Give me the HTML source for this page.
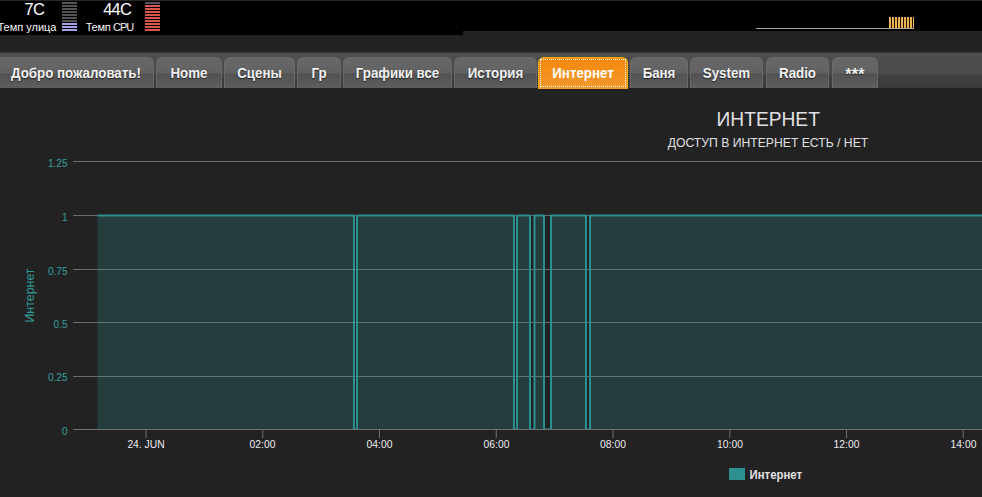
<!DOCTYPE html>
<html lang="ru">
<head>
<meta charset="utf-8">
<title>Интернет</title>
<style>
html,body{margin:0;padding:0;}
body{width:982px;height:497px;overflow:hidden;background:#222;position:relative;font-family:"Liberation Sans","DejaVu Sans",sans-serif;color:#fff;}
#topline{position:absolute;left:0;top:0;width:982px;height:1px;background:#282828;}
#hdrL{position:absolute;left:0;top:1px;width:463px;height:34px;background:#000;}
#hdrR{position:absolute;left:463px;top:1px;width:519px;height:30px;background:#000;}
.val{position:absolute;top:1px;font-size:16.5px;line-height:17px;letter-spacing:-0.8px;color:#fff;text-align:right;white-space:nowrap;}
.lbl{position:absolute;top:21px;font-size:11px;line-height:13px;color:#f4f4f4;text-align:right;white-space:nowrap;}
.vbar{position:absolute;top:2px;width:15px;height:30px;}
.vbar i{display:block;height:2px;margin-bottom:1px;background:#535353;}
.vbar i.b{background:#a6a2ea;}
.vbar i.r{background:#d8564c;}
#hline{position:absolute;left:756px;top:28px;width:158px;height:1px;background:#a8a8a8;}
#hbar{position:absolute;left:889px;top:17px;height:11px;width:25px;background:repeating-linear-gradient(90deg,#e6b450 0,#e6b450 2px,#200 2px,#200 3px);}
#tabs{position:absolute;left:0;top:52px;width:982px;height:36px;background:linear-gradient(#383838 0,#383838 1px,#4e4e4e 1px,#4b4b4b 22px,#404040 24px,#3a3a3a 36px);}
.tab{position:absolute;top:5px;height:31px;box-sizing:border-box;border:1px solid #696969;border-bottom:none;border-radius:6px 6px 0 0;
 background:linear-gradient(#686868 0,#626262 48%,#525252 54%,#5e5e5e 100%);
 font-weight:bold;font-size:13.3px;line-height:31px;text-align:center;color:#f2f2f2;text-shadow:0 1px 1px #222;white-space:nowrap;}
.tab .t{display:inline-block;line-height:normal;vertical-align:baseline;transform:scaleY(1.07);transform-origin:50% 79%;}
.tab.act{height:32px;background:linear-gradient(#f5870a 0,#f39a2e 100%);border-color:#ffaf0f;color:#fff;text-shadow:none;}
.tab.act:after{content:"";position:absolute;left:1px;top:1px;right:1px;bottom:2px;border:1px dotted #fff;}
#chart{position:absolute;left:0;top:89px;}
</style>
</head>
<body>
<div id="topline"></div>
<div id="hdrL"></div>
<div id="hdrR"></div>

<div class="val" style="left:0;width:44px;">7C</div>
<div class="lbl" style="left:-20px;width:76.5px;">Темп улица</div>
<div class="vbar" style="left:62px;"><i></i><i></i><i></i><i></i><i></i><i></i><i></i><i class="b"></i><i class="b"></i><i class="b"></i></div>

<div class="val" style="left:80px;width:51px;">44C</div>
<div class="lbl" style="left:60px;width:73px;letter-spacing:-0.3px;">Темп <span style="letter-spacing:-1.1px">CPU</span></div>
<div class="vbar" style="left:145px;"><i></i><i class="r"></i><i class="r"></i><i class="r"></i><i class="r"></i><i class="r"></i><i class="r"></i><i class="r"></i><i class="r"></i><i class="r"></i></div>

<div id="hline"></div>
<div id="hbar"></div>

<div id="tabs">
 <div class="tab" style="left:-8px;width:162px;padding-left:6px;"><span class="t">Добро пожаловать!</span></div>
 <div class="tab" style="left:156px;width:66px;"><span class="t">Home</span></div>
 <div class="tab" style="left:224px;width:71px;"><span class="t">Сцены</span></div>
 <div class="tab" style="left:297px;width:44px;"><span class="t">Гр</span></div>
 <div class="tab" style="left:343px;width:109px;"><span class="t">Графики все</span></div>
 <div class="tab" style="left:454px;width:83px;"><span class="t">История</span></div>
 <div class="tab act" style="left:538px;width:90px;"><span class="t">Интернет</span></div>
 <div class="tab" style="left:630px;width:58px;"><span class="t">Баня</span></div>
 <div class="tab" style="left:690px;width:73px;"><span class="t">System</span></div>
 <div class="tab" style="left:766px;width:63px;"><span class="t">Radio</span></div>
 <div class="tab" style="left:832px;width:46px;"><span style="font-size:16px;letter-spacing:0.2px;position:relative;top:1px;">***</span></div>
</div>

<svg id="chart" width="982" height="408" viewBox="0 89 982 408" font-family="'Liberation Sans','DejaVu Sans',sans-serif">
 <g stroke="#6c6c6e" stroke-width="1" shape-rendering="crispEdges">
  <line x1="73" x2="982" y1="161.5" y2="161.5"/>
  <line x1="73" x2="982" y1="215.5" y2="215.5"/>
  <line x1="73" x2="982" y1="269.5" y2="269.5"/>
  <line x1="73" x2="982" y1="322.5" y2="322.5"/>
  <line x1="73" x2="982" y1="376.5" y2="376.5"/>
 </g>
 <clipPath id="pc"><rect x="73" y="150" width="920" height="279"/></clipPath>
 <g clip-path="url(#pc)">
 <path fill="rgba(43,144,143,0.25)" d="M97.5,429.5V215.5H354V429.5H357V215.5H514V429.5H517V215.5H530V429.5H534.5V215.5H544V429.5H551V215.5H586V429.5H590V215.5H990V429.5Z"/>
 <path fill="none" stroke="#2b908f" stroke-width="2" stroke-linejoin="round" d="M97.5,215.5H354V429.5H357V215.5H514V429.5H517V215.5H530V429.5H534.5V215.5H544V429.5H551V215.5H586V429.5H590V215.5H990"/>
 </g>
 <g stroke="#707073" stroke-width="1" shape-rendering="crispEdges">
  <line x1="73" x2="982" y1="429.5" y2="429.5"/>
  </g>
 <g stroke="#707073" stroke-width="1">
  <line x1="146" x2="146" y1="430" y2="438"/>
  <line x1="262.75" x2="262.75" y1="430" y2="438"/>
  <line x1="379.5" x2="379.5" y1="430" y2="438"/>
  <line x1="496.25" x2="496.25" y1="430" y2="438"/>
  <line x1="613" x2="613" y1="430" y2="438"/>
  <line x1="729.75" x2="729.75" y1="430" y2="438"/>
  <line x1="846.5" x2="846.5" y1="430" y2="438"/>
  <line x1="963.25" x2="963.25" y1="430" y2="438"/>
 </g>
 <g font-size="10.3" fill="#ededf0" text-anchor="middle">
  <text x="146" y="448">24. JUN</text>
  <text x="262.5" y="448">02:00</text>
  <text x="379.5" y="448">04:00</text>
  <text x="496.5" y="448">06:00</text>
  <text x="613" y="448">08:00</text>
  <text x="730" y="448">10:00</text>
  <text x="846.5" y="448">12:00</text>
  <text x="963.5" y="448">14:00</text>
 </g>
 <g font-size="10" fill="#36a09e" text-anchor="end">
  <text x="67.5" y="167">1.25</text>
  <text x="67.5" y="220.5">1</text>
  <text x="67.5" y="274.5">0.75</text>
  <text x="67.5" y="327.5">0.5</text>
  <text x="67.5" y="381">0.25</text>
  <text x="67.5" y="434.5">0</text>
 </g>
 <text transform="translate(34,295.5) rotate(-90)" font-size="12.4" fill="#2f9a99" text-anchor="middle">Интернет</text>
 <text transform="translate(768.2,126) scale(0.96,1)" font-size="20" fill="#e0e0e3" text-anchor="middle">ИНТЕРНЕТ</text>
 <text x="768" y="147" font-size="12.2" fill="#e0e0e3" text-anchor="middle">ДОСТУП В ИНТЕРНЕТ ЕСТЬ / НЕТ</text>
 <rect x="729" y="468" width="16" height="12" fill="#2b908f"/>
 <text transform="translate(749.5,479) scale(0.92,1)" font-size="12.4" font-weight="bold" fill="#e0e0e3">Интернет</text>
</svg>
</body>
</html>
